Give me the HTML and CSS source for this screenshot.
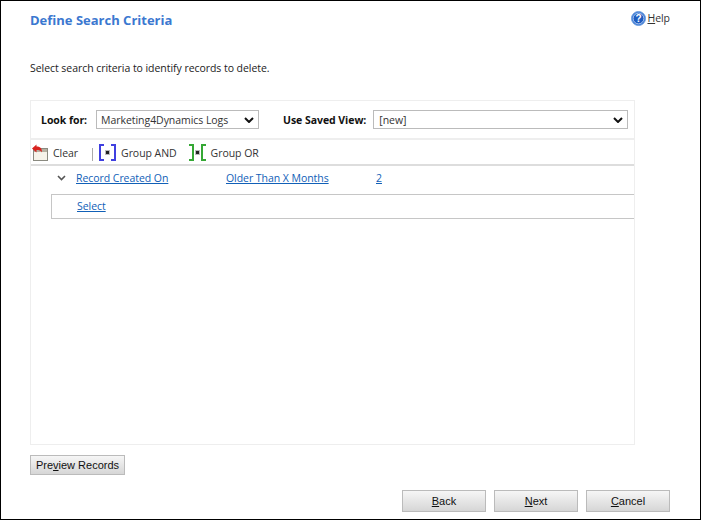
FILE: index.html
```html
<!DOCTYPE html>
<html lang="en">
<head>
    <meta charset="UTF-8">
    <meta name="viewport" content="width=device-width, initial-scale=1.0">
    <title>Define Search Criteria</title>
    <link rel="stylesheet" href="styles.css">
</head>
<body>
    <div class="dialog">
        <div class="header">
            <h1 class="title">Define Search Criteria</h1>
            <a class="help" href="#">
                <svg width="15" height="15" viewBox="0 0 15 15">
                    <circle cx="7.5" cy="7.5" r="7" fill="#2f6fd0" stroke="#6fa0e0"/>
                    <circle cx="7.5" cy="7.5" r="5.4" fill="#1f5cc0" stroke="#cfe0f7" stroke-width="0.8"/>
                    <text x="7.5" y="11" text-anchor="middle" class="help-mark">?</text>
                </svg>
                <span><u>H</u>elp</span>
            </a>
        </div>

        <p class="intro">Select search criteria to identify records to delete.</p>

        <div class="panel">
            <div class="look-row">
                <label class="field-label" for="lookFor">Look for:</label>
                <select class="select select-look" id="lookFor">
                    <option>Marketing4Dynamics Logs</option>
                </select>
                <label class="field-label label-view" for="savedView">Use Saved View:</label>
                <select class="select select-view" id="savedView">
                    <option>[new]</option>
                </select>
            </div>

            <div class="toolbar">
                <span class="tool tool-clear">
                    <svg width="17" height="17" viewBox="0 0 17 17">
                        <rect x="1.500" y="4.500" width="14" height="12" fill="#f6f3ea" stroke="#8a8a80"/>
                        <rect x="2" y="5" width="13" height="3" fill="#b5b1a2"/>
                        <path d="M0 4.500 L4.500 0.500 L4.500 2.500 C8 2.500 10 4 10 8.500 C9 6.500 7 6 4.500 6 L4.500 8.500 Z" fill="#d8231f"/>
                    </svg>
                    Clear
                </span>
                <span class="tool-sep"></span>
                <span class="tool tool-and">
                    <svg width="17" height="17" viewBox="0 0 17 17">
                        <path d="M5 1 H1 V16 H5 M12 1 H16 V16 H12" fill="none" stroke="#3f3fe0" stroke-width="2"/>
                        <rect x="6.500" y="6.500" width="4" height="4" fill="#fff" stroke="#bbb"/>
                        <rect x="7" y="7" width="3" height="3" fill="#222"/>
                    </svg>
                    Group AND
                </span>
                <span class="tool tool-or">
                    <svg width="17" height="17" viewBox="0 0 17 17">
                        <path d="M0 1 H4 V16 H0 M17 1 H13 V16 H17" fill="none" stroke="#35a835" stroke-width="2"/>
                        <rect x="6.500" y="6.500" width="4" height="4" fill="#fff" stroke="#bbb"/>
                        <rect x="7" y="7" width="3" height="3" fill="#222"/>
                    </svg>
                    Group OR
                </span>
            </div>

            <div class="criteria-row">
                <svg class="chevron" width="9" height="6" viewBox="0 0 9 6">
                    <path d="M1 1 L4.500 4.500 L8 1" fill="none" stroke="#555" stroke-width="1.600"/>
                </svg>
                <a class="link link-field" href="#">Record Created On</a>
                <a class="link link-op" href="#">Older Than X Months</a>
                <a class="link" href="#">2</a>
            </div>
            <div class="select-row">
                <a class="link" href="#">Select</a>
            </div>
        </div>

        <div class="preview-row">
            <button class="btn btn-preview" type="button">Pre<u>v</u>iew Records</button>
        </div>

        <div class="footer">
            <button class="btn btn-nav" type="button"><u>B</u>ack</button>
            <button class="btn btn-nav" type="button"><u>N</u>ext</button>
            <button class="btn btn-nav" type="button"><u>C</u>ancel</button>
        </div>
    </div>
</body>
</html>
```

FILE: styles.css
```css
* {
    box-sizing: border-box;
}
body {
    margin: 0;
    background-color: white;
    font-family: "Open Sans", "Noto Sans", sans-serif;
    font-size: 10.5px;
    letter-spacing: -0.05px;
    color: #222;
}
.dialog {
    width: 701px;
    height: 520px;
    border: 1px solid black;
    padding: 0 30px 0 29px;
    display: flex;
    flex-direction: column;
    background-color: white;
}
.header {
    display: flex;
    justify-content: space-between;
    align-items: flex-start;
    height: 60px;
}
.title {
    margin: 10px 0 0;
    font-size: 13px;
    line-height: 18px;
    font-weight: bold;
    letter-spacing: 0;
    color: #3b78d0;
}
.help {
    display: flex;
    align-items: center;
    gap: 1px;
    margin-top: 10px;
    color: #333;
    text-decoration: none;
    line-height: 15px;
}
.help-mark {
    font-family: "Liberation Sans", sans-serif;
    font-size: 10px;
    font-weight: bold;
    fill: white;
}
.intro {
    margin: 0;
    height: 39px;
    line-height: 14px;
}
.panel {
    width: 605px;
    height: 345px;
    border: 1px solid #eeeeee;
    flex: none;
}
.look-row {
    display: flex;
    align-items: center;
    height: 39px;
    padding-left: 10px;
    border-bottom: 2px solid #eeeeee;
}
.field-label {
    font-weight: bold;
    color: #111;
    white-space: nowrap;
}
.select {
    appearance: none;
    height: 19px;
    border: 1px solid #bbbbbb;
    border-radius: 0;
    padding: 0 4px;
    background: white url("data:image/svg+xml,%3Csvg xmlns='http://www.w3.org/2000/svg' width='10' height='6'%3E%3Cpath d='M1 1 L5 5 L9 1' fill='none' stroke='%23111' stroke-width='2'/%3E%3C/svg%3E") no-repeat right 4px center;
    font-family: inherit;
    font-size: 10.5px;
    letter-spacing: -0.05px;
    color: #333;
}
.select-look {
    width: 163px;
    margin-left: 9px;
}
.label-view {
    margin-left: 24px;
}
.select-view {
    width: 255px;
    margin-left: 7px;
    padding-left: 5px;
}
.toolbar {
    display: flex;
    align-items: center;
    height: 26px;
    padding-left: 1px;
    padding-top: 1px;
    border-bottom: 2px solid #dddddd;
}
.tool {
    display: flex;
    align-items: center;
    gap: 5px;
    color: #333;
}
.tool-clear {
    gap: 4px;
}
.tool-sep {
    width: 1px;
    height: 13px;
    margin: 3px 6px 0 14px;
    background-color: #aaaaaa;
}
.tool-or {
    margin-left: 12px;
}
.criteria-row {
    display: flex;
    align-items: center;
    height: 28px;
    padding-left: 26px;
    padding-bottom: 5px;
}
.chevron {
    margin-right: 10px;
}
.link {
    color: #1160b7;
    text-decoration: underline;
}
.link-field {
    width: 150px;
}
.link-op {
    width: 150px;
}
.select-row {
    height: 25px;
    margin-left: 20px;
    padding-left: 25px;
    border: 1px solid #c6c6c6;
    border-right: none;
    line-height: 22px;
}
.preview-row {
    margin-top: 10px;
}
.btn {
    border: 1px solid #bbbbbb;
    background: linear-gradient(to bottom, #f6f6f6, #d6d6d6);
    font-family: "Liberation Sans", sans-serif;
    font-size: 11px;
    letter-spacing: 0;
    color: #111;
    padding: 0;
}
.btn-preview {
    width: 95px;
    height: 20px;
}
.footer {
    display: flex;
    justify-content: flex-end;
    gap: 8px;
    margin-top: 15px;
}
.btn-nav {
    width: 84px;
    height: 22px;
}
```
